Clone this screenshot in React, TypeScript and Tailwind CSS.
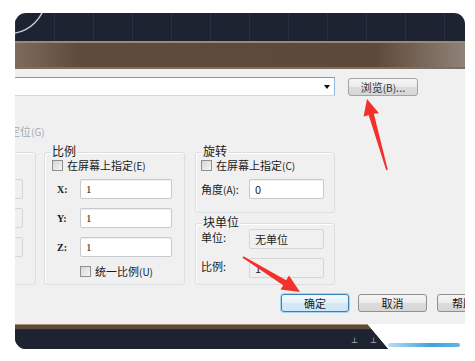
import React from "react";

const cjk = { fontFamily: '"Noto Sans CJK SC", "Noto Sans", sans-serif' };
const serif = { fontFamily: '"Liberation Serif", "Noto Sans CJK SC", serif' };

function Check() {
  return (
    <span className="block w-[11px] h-[11px] shrink-0 border border-[#8f8f8f] bg-[linear-gradient(135deg,#d6d6d6,#f5f5f5)]" />
  );
}

function Input({ w, children, ro, sans }: { w: string; children?: React.ReactNode; ro?: boolean; sans?: boolean }) {
  return (
    <div
      className={`${w} h-[20px] shrink-0 rounded-[2px] border flex items-center pl-[5px] text-[11px] text-[#222] ${
        ro
          ? "bg-[#f0f0f0] border-[#d6d6d6]"
          : "bg-white border-[#c7cacf] shadow-[inset_0_1px_1px_rgba(0,0,0,0.07)]"
      }`}
      style={sans ? cjk : serif}
    >
      {children}
    </div>
  );
}

function Group({ title, className, children }: { title: string; className: string; children?: React.ReactNode }) {
  return (
    <div className={`relative shrink-0 rounded-[3px] border border-[#d9dfe3] shadow-[inset_1px_1px_0_#ffffff] ${className}`}>
      {title && (
        <span
          className="absolute left-[6px] top-[-9px] px-[1px] bg-[#f0f0f0] text-[12px] leading-[14px] text-[#1a1a1a]"
          style={cjk}
        >
          {title}
        </span>
      )}
      {children}
    </div>
  );
}

function Btn({ children, w, primary, className = "" }: { children: React.ReactNode; w: string; primary?: boolean; className?: string }) {
  return (
    <div
      className={`${w} h-[18px] shrink-0 rounded-[3px] border flex items-center justify-center text-[11px] text-[#1a1a1a] ${
        primary
          ? "border-[#3c7fb1] shadow-[0_0_0_1px_#a6d5f2] bg-[linear-gradient(#f1f8fd,#e3f1fb_50%,#d3e9f7_51%,#cfe5f5)]"
          : "border-[#8e8f8f] bg-[linear-gradient(#f5f5f5,#ebebeb_50%,#dcdcdc_51%,#d6d6d6)]"
      } ${className}`}
      style={cjk}
    >
      {children}
    </div>
  );
}

const Small = ({ children }: { children: React.ReactNode }) => (
  <span className="text-[10px]">{children}</span>
);

export default function App() {
  return (
    <div className="relative w-[475px] h-[361px] bg-white overflow-hidden pt-[13px] pl-[15px]">
      <div className="w-[450px] h-[336px] rounded-[11px] overflow-hidden flex flex-col">
        {/* top navy band */}
        <div className="relative h-[28px] shrink-0 bg-[#1d2331] bg-[repeating-linear-gradient(90deg,#283042_0_1px,transparent_1px_39px)]">
          <svg className="absolute left-0 top-0" width="60" height="28" viewBox="0 0 60 28">
            <circle cx="-6.3" cy="-16.4" r="37" fill="none" stroke="#c9ced8" strokeWidth="1.4" />
          </svg>
        </div>
        {/* brown band */}
        <div className="h-[28px] shrink-0 border-t-[2px] border-t-[#9a8878] border-b-[2px] border-b-[#806e60] bg-[linear-gradient(90deg,#7d6b5d_0%,#5f4b3c_14%,#5d4939_80%,#8f8277_100%)]" />
        {/* dialog */}
        <div className="h-[255px] shrink-0 bg-[#f0f0f0] flex flex-col pt-[8px] overflow-hidden">
          <div className="flex items-start">
            <div className="relative w-[320px] h-[19px] bg-white border-t border-t-[#6f9ccb] border-b border-b-[#c3d9ee] border-r border-r-[#8fb6dd] flex items-center justify-end pr-[4px]">
              <span className="block w-0 h-0 border-l-[3px] border-r-[3px] border-t-[4px] border-l-transparent border-r-transparent border-t-[#111]" />
            </div>
            <Btn w="w-[70px]" className="ml-[13px] mt-[1px] border-[#a3a3a3] text-[#333]">
              浏览<Small>(B)</Small>...
            </Btn>
          </div>
          <div className="mt-[28px] -ml-[6px] h-[14px] leading-[14px] text-[11px] text-[#a3abb3]" style={cjk}>
            定位<Small>(G)</Small>
          </div>
          <div className="mt-[14px] flex items-start">
            {/* left (cut) group */}
            <Group title="" className="-ml-[40px] w-[61px] h-[133px]">
              <div className="flex flex-col items-end pr-[12px] pt-[26px] gap-[9px]">
                <Input w="w-[30px]" ro />
                <Input w="w-[30px]" ro />
                <Input w="w-[30px]" ro />
              </div>
            </Group>
            {/* scale */}
            <Group title="比例" className="ml-[8px] w-[141px] h-[133px]">
              <div className="pl-[7px] pt-[7px] flex flex-col text-[11px] text-[#1a1a1a]" style={cjk}>
                <div className="flex items-center gap-[4px] h-[11px]">
                  <Check />
                  <span className="leading-[12px]">
                    在屏幕上指定<Small>(E)</Small>
                  </span>
                </div>
                {["X", "Y", "Z"].map((l, i) => (
                  <div key={l} className={`flex items-center h-[20px] ${i === 0 ? "mt-[8px]" : "mt-[9px]"}`}>
                    <span className="w-[28px] pl-[5px] font-bold text-[10px]" style={serif}>
                      {l}:
                    </span>
                    <Input w="w-[92px]">1</Input>
                  </div>
                ))}
                <div className="flex items-center gap-[4px] h-[11px] mt-[9px] pl-[28px]">
                  <Check />
                  <span className="leading-[12px]">
                    统一比例<Small>(U)</Small>
                  </span>
                </div>
              </div>
            </Group>
            {/* right column */}
            <div className="ml-[10px] flex flex-col">
              <Group title="旋转" className="w-[140px] h-[61px]">
                <div className="pl-[5px] pt-[7px] flex flex-col text-[11px] text-[#1a1a1a]" style={cjk}>
                  <div className="flex items-center gap-[4px] h-[11px]">
                    <Check />
                    <span className="leading-[12px]">
                      在屏幕上指定<Small>(C)</Small>
                    </span>
                  </div>
                  <div className="flex items-center h-[20px] mt-[8px]">
                    <span className="w-[48px]">
                      角度<Small>(A)</Small>:
                    </span>
                    <Input w="w-[75px]" sans>
                      0
                    </Input>
                  </div>
                </div>
              </Group>
              <Group title="块单位" className="mt-[10px] w-[140px] h-[62px]">
                <div className="pl-[5px] pt-[5px] flex flex-col gap-[9px] text-[11px] text-[#1a1a1a]" style={cjk}>
                  <div className="flex items-center h-[20px]">
                    <span className="w-[48px] -mt-[3px]">单位:</span>
                    <Input w="w-[75px]" ro sans>
                      无单位
                    </Input>
                  </div>
                  <div className="flex items-center h-[20px]">
                    <span className="w-[48px] -mt-[3px]">比例:</span>
                    <Input w="w-[75px]" ro sans>
                      1
                    </Input>
                  </div>
                </div>
              </Group>
            </div>
          </div>
          <div className="mt-[9px] flex items-start">
            <Btn w="w-[68px]" primary className="ml-[266px]">
              确定
            </Btn>
            <Btn w="w-[69px]" className="ml-[9px]">
              取消
            </Btn>
            <Btn w="w-[60px]" className="ml-[10px] justify-start pl-[14px]">
              帮助
            </Btn>
          </div>
        </div>
        {/* bottom band */}
        <div className="h-[25px] shrink-0 flex">
          <div className="relative w-[373px] h-full border-t border-t-[#a39383] bg-[linear-gradient(#5e4a3b_0_4px,#2a2a33_4px_5px,#1d2331_5px)] bg-[#1d2331] [clip-path:polygon(0_0,352px_0,100%_100%,0_100%)]">
            <span className="absolute left-[336px] top-[11px] text-[8px] leading-[8px] text-[#cfd3da]">⊥</span>
            <span className="absolute left-[355px] top-[11px] text-[8px] leading-[8px] text-[#cfd3da]">⊥</span>
          </div>
          <div className="flex-1 bg-white flex items-end pb-[2px]">
            <div className="h-[4px] w-[72px] rounded-[2px] bg-[linear-gradient(90deg,#b9def4,#3ea2dd_60%,#62b6e6)]" />
          </div>
        </div>
      </div>
      {/* annotation arrows */}
      <svg className="absolute left-0 top-0 pointer-events-none" width="475" height="361" viewBox="0 0 475 361">
        <polygon
          fill="#f2302c"
          points="367,99 379,113.2 373.9,113.8 387.8,169.8 386.2,170.2 368.7,115.2 363.6,116.6"
        />
        <polygon
          fill="#f2302c"
          points="300,292 280.5,289.6 283.2,285.2 242.5,257.8 243.5,256.2 286.2,280.2 289,275.6"
        />
      </svg>
    </div>
  );
}
